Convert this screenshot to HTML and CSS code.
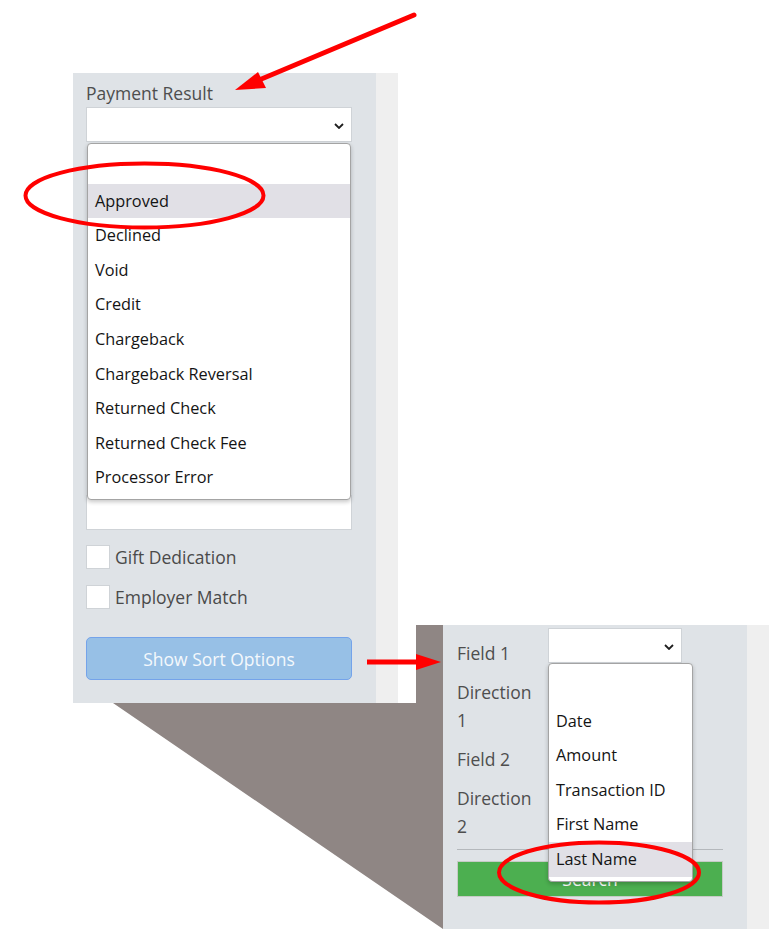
FILE: index.html
```html
<!DOCTYPE html>
<html lang="en">
<head>
<meta charset="utf-8">
<title>Payment Result filter</title>
<link rel="stylesheet" href="styles.css">
</head>
<body>
<div class="stage">
  <svg class="wedge" width="776" height="950" viewBox="0 0 776 950" aria-hidden="true">
    <polygon points="113,703 416,703 416,625 443,625 443,929" fill="#8f8684"/>
  </svg>

  <section class="crop crop-left">
    <div class="panel panel-left">
      <div class="label">Payment Result</div>
      <div class="select">
        <svg class="chev" width="10" height="6" viewBox="0 0 10 6"><path d="M1 1 L5 5 L9 1" fill="none" stroke="#1e1e1e" stroke-width="1.8"/></svg>
      </div>
      <div class="textbox"></div>
      <div class="check-row"><span class="box"></span><span class="check-label">Gift Dedication</span></div>
      <div class="check-row"><span class="box"></span><span class="check-label">Employer Match</span></div>
      <div class="btn btn-sort">Show Sort Options</div>

      <ul class="menu menu-left">
        <li class="opt"></li>
        <li class="opt hl">Approved</li>
        <li class="opt">Declined</li>
        <li class="opt">Void</li>
        <li class="opt">Credit</li>
        <li class="opt">Chargeback</li>
        <li class="opt">Chargeback Reversal</li>
        <li class="opt">Returned Check</li>
        <li class="opt">Returned Check Fee</li>
        <li class="opt">Processor Error</li>
      </ul>
    </div>
    <div class="strip"></div>
  </section>

  <section class="crop crop-right">
    <div class="panel panel-right">
      <div class="form-grid">
        <div class="flabel">Field 1</div>
        <div class="select small">
          <svg class="chev" width="10" height="6" viewBox="0 0 10 6"><path d="M1 1 L5 5 L9 1" fill="none" stroke="#1e1e1e" stroke-width="1.8"/></svg>
        </div>
        <div class="flabel">Direction 1</div>
        <div class="select small"></div>
        <div class="flabel">Field 2</div>
        <div class="select small"></div>
        <div class="flabel">Direction 2</div>
        <div class="select small"></div>
      </div>
      <div class="rule"></div>
      <div class="btn btn-search">Search</div>

      <ul class="menu menu-right">
        <li class="opt"></li>
        <li class="opt">Date</li>
        <li class="opt">Amount</li>
        <li class="opt">Transaction ID</li>
        <li class="opt">First Name</li>
        <li class="opt hl">Last Name</li>
      </ul>
    </div>
    <div class="strip"></div>
  </section>

  <svg class="marks" width="776" height="950" viewBox="0 0 776 950" aria-hidden="true">
    <line x1="414" y1="15" x2="252" y2="83" stroke="#ff0000" stroke-width="5" stroke-linecap="round"/>
    <polygon points="235,90 258,72 266,88" fill="#ff0000"/>
    <line x1="367" y1="662" x2="420" y2="662" stroke="#ff0000" stroke-width="5"/>
    <polygon points="416,654 416,670 441,662" fill="#ff0000"/>
    <ellipse cx="144.5" cy="195.5" rx="119" ry="32" fill="none" stroke="#ff0000" stroke-width="4"/>
    <ellipse cx="599" cy="872.5" rx="100" ry="30" fill="none" stroke="#ff0000" stroke-width="4"/>
  </svg>
</div>
</body>
</html>
```

FILE: styles.css
```css
* { box-sizing: border-box; }

html, body {
  margin: 0;
  padding: 0;
  background: #ffffff;
}

body {
  font-family: "Open Sans", "Liberation Sans", sans-serif;
  font-size: 17.5px;
  color: #4e4e4e;
}

.stage {
  position: relative;
  width: 776px;
  height: 950px;
  overflow: hidden;
}

.wedge, .marks {
  position: absolute;
  left: 0;
  top: 0;
}

.wedge { z-index: 0; }
.marks { z-index: 5; pointer-events: none; }

.crop {
  position: absolute;
  z-index: 1;
  display: flex;
}

.crop-left {
  left: 73px;
  top: 73px;
  height: 630px;
}

.crop-right {
  left: 443px;
  top: 625px;
  height: 304px;
}

.panel {
  position: relative;
  background: #dfe3e7;
  width: 304px;
  height: 100%;
}

.panel-left {
  width: 303px;
  padding: 6px 0 0 13px;
}

.strip {
  width: 22px;
  height: 100%;
  background: #efefef;
}

.label {
  line-height: 28px;
}

.select {
  position: relative;
  width: 266px;
  height: 35px;
  background: #ffffff;
  border: 1px solid #cfd3d7;
}

.chev {
  position: absolute;
  right: 7px;
  top: 15px;
}

.textbox {
  width: 266px;
  height: 35px;
  margin-top: 353px;
  background: #ffffff;
  border: 1px solid #cfd3d7;
}

.check-row {
  display: flex;
  align-items: center;
  gap: 5px;
  height: 24px;
  margin-top: 15px;
}

.check-row + .check-row { margin-top: 16px; }

.box {
  width: 24px;
  height: 24px;
  background: #ffffff;
  border: 1px solid #cfd3d7;
}

.check-label {
  color: #4a4a4a;
  line-height: 24px;
}

.btn {
  display: flex;
  align-items: center;
  justify-content: center;
  color: #ffffff;
}

.btn-sort {
  width: 266px;
  height: 43px;
  margin-top: 28px;
  background: #97c0e6;
  border: 1px solid #74a3ea;
  border-radius: 5px;
  color: #f4f8fc;
}

.menu {
  position: absolute;
  margin: 0;
  padding: 5px 0 4px;
  list-style: none;
  background: #ffffff;
  border: 1px solid #a4a4a4;
  border-radius: 4px;
  box-shadow: 0 2px 4px rgba(0, 0, 0, 0.22);
  color: #141414;
  font-size: 16.3px;
}

.menu-left {
  left: 14px;
  top: 70px;
  width: 264px;
  height: 357px;
}

.menu-right {
  left: 105px;
  top: 38px;
  width: 145px;
  height: 219px;
}

.opt {
  height: 34.6px;
  line-height: 34.6px;
  padding-left: 7px;
  white-space: nowrap;
}

.opt.hl { background: #e1e0e6; }

.panel-right {
  padding: 3px 0 0 14px;
}

.form-grid {
  display: grid;
  grid-template-columns: 91px 134px;
  align-items: start;
}

.flabel {
  line-height: 28px;
  padding: 11px 12px 0 0;
  color: #4e4e4e;
}

.select.small { width: 134px; }

.rule {
  width: 266px;
  height: 1px;
  margin-top: 9px;
  background: #b4b8bc;
}

.btn-search {
  width: 266px;
  height: 36px;
  margin-top: 11px;
  background: #4caf50;
  border: 1px solid #c6cbc6;
}
```
